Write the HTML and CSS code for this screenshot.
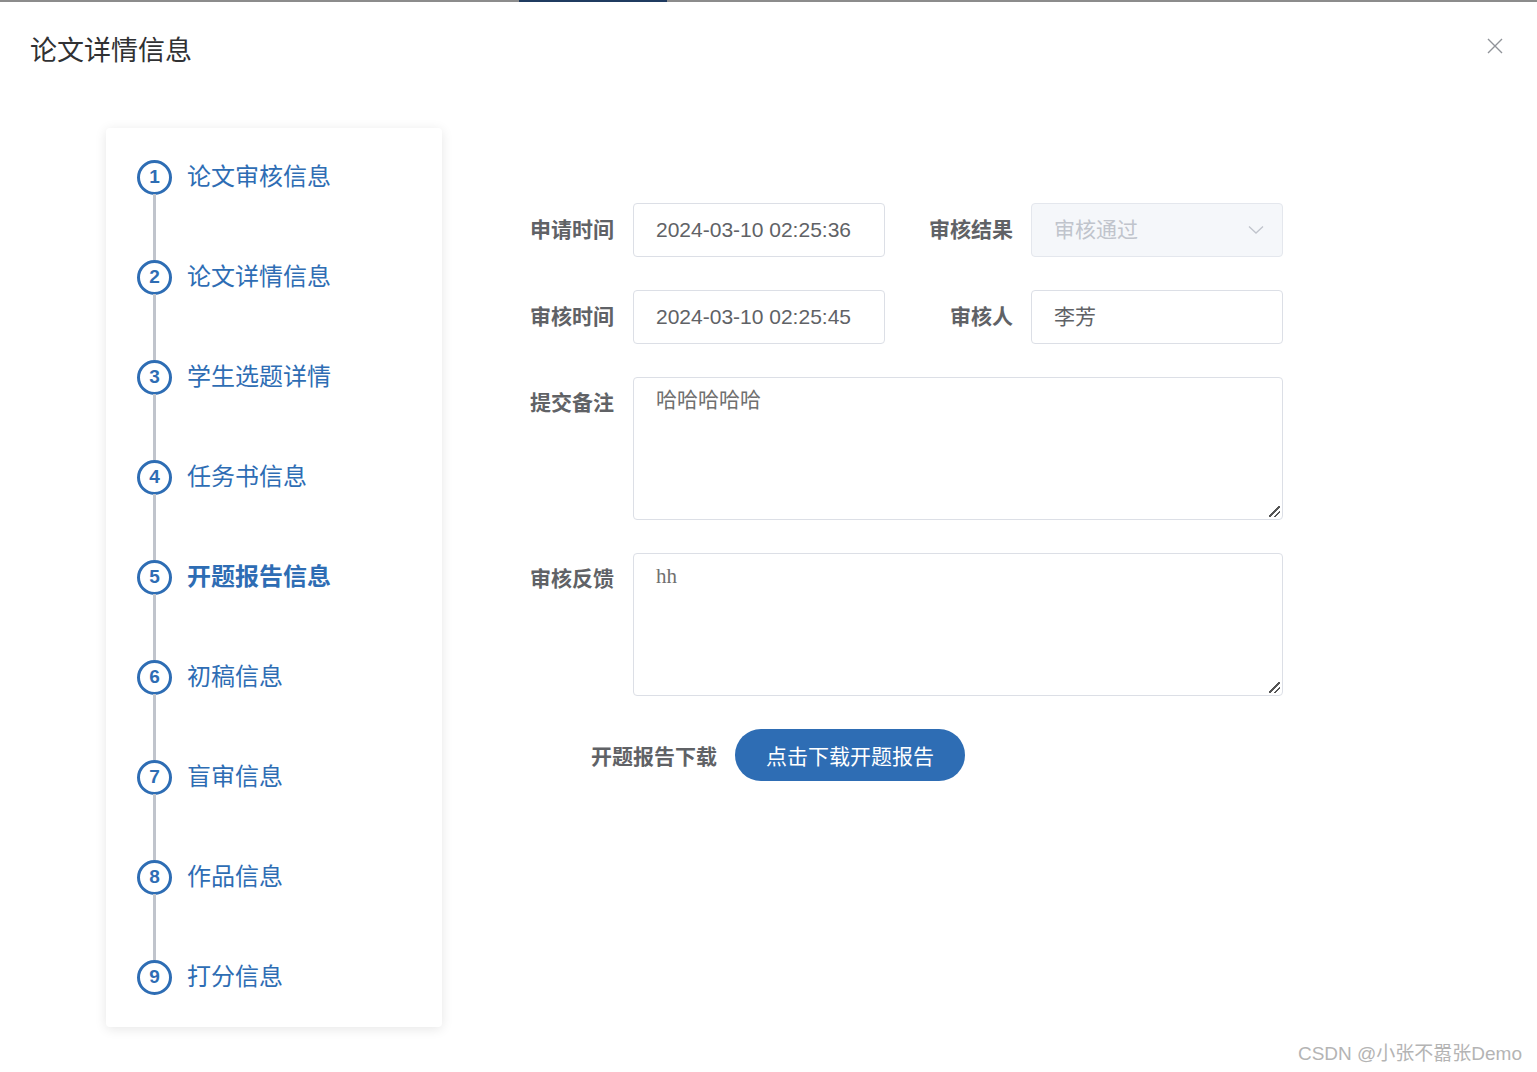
FILE: index.html
```html
<!DOCTYPE html>
<html lang="zh-CN">
<head>
<meta charset="utf-8">
<title>论文详情信息</title>
<link rel="stylesheet" href="styles.css">
</head>
<body>
<div class="topbar"><div class="topbar-active"></div></div>
<div class="dialog">
  <header class="dialog-header">
    <h2 class="dialog-title">论文详情信息</h2>
    <svg class="close" viewBox="0 0 16 16" width="16" height="16"><path d="M1 1 L15 15 M15 1 L1 15" stroke="#909399" stroke-width="1.4" fill="none"/></svg>
  </header>
  <div class="dialog-body">
    <aside class="steps">
      <div class="step"><span class="num">1</span><span class="label">论文审核信息</span></div>
      <div class="connector"></div>
      <div class="step"><span class="num">2</span><span class="label">论文详情信息</span></div>
      <div class="connector"></div>
      <div class="step"><span class="num">3</span><span class="label">学生选题详情</span></div>
      <div class="connector"></div>
      <div class="step"><span class="num">4</span><span class="label">任务书信息</span></div>
      <div class="connector"></div>
      <div class="step active"><span class="num">5</span><span class="label">开题报告信息</span></div>
      <div class="connector"></div>
      <div class="step"><span class="num">6</span><span class="label">初稿信息</span></div>
      <div class="connector"></div>
      <div class="step"><span class="num">7</span><span class="label">盲审信息</span></div>
      <div class="connector"></div>
      <div class="step"><span class="num">8</span><span class="label">作品信息</span></div>
      <div class="connector"></div>
      <div class="step"><span class="num">9</span><span class="label">打分信息</span></div>
    </aside>
    <form class="form">
      <div class="row">
        <label class="lbl">申请时间</label>
        <div class="input">2024-03-10 02:25:36</div>
        <label class="lbl lbl2">审核结果</label>
        <div class="input disabled"><span>审核通过</span>
          <svg class="arrow" viewBox="0 0 16 10" width="16" height="10"><path d="M1 1.5 L8 8 L15 1.5" stroke="#c0c4cc" stroke-width="1.3" fill="none"/></svg>
        </div>
      </div>
      <div class="row">
        <label class="lbl">审核时间</label>
        <div class="input">2024-03-10 02:25:45</div>
        <label class="lbl lbl2">审核人</label>
        <div class="input">李芳</div>
      </div>
      <div class="row">
        <label class="lbl lbl-top">提交备注</label>
        <div class="textarea">哈哈哈哈哈<span class="grip"></span></div>
      </div>
      <div class="row">
        <label class="lbl lbl-top">审核反馈</label>
        <div class="textarea">hh<span class="grip"></span></div>
      </div>
      <div class="row download">
        <label class="lbl-dl">开题报告下载</label>
        <button type="button" class="btn">点击下载开题报告</button>
      </div>
    </form>
  </div>
</div>
<div class="watermark">CSDN @小张不嚣张Demo</div>
</body>
</html>
```
FILE: styles.css
```css
* { box-sizing: border-box; }
html, body { margin: 0; padding: 0; }
body {
  width: 1537px;
  height: 1072px;
  background: #fff;
  font-family: "Liberation Sans", "Noto Sans CJK SC", sans-serif;
  color: #606266;
  overflow: hidden;
  position: relative;
}
.topbar {
  height: 2px;
  background: #8c8c8c;
}
.topbar-active {
  margin-left: 519px;
  width: 148px;
  height: 2px;
  background: #1f3b60;
}
.dialog-header {
  display: flex;
  justify-content: space-between;
  align-items: flex-start;
  padding: 0 34px 0 30px;
}
.dialog-title {
  margin: 31px 0 0;
  font-size: 27px;
  line-height: 36px;
  font-weight: 400;
  color: #303133;
}
.close {
  margin-top: 36px;
}
.dialog-body {
  display: flex;
  align-items: flex-start;
  padding: 59px 0 0 106px;
}
.steps {
  width: 336px;
  height: 899px;
  background: #fff;
  border-radius: 4px;
  box-shadow: 0 2px 12px rgba(0, 0, 0, 0.1);
  padding: 32px 0 0 31px;
  display: flex;
  flex-direction: column;
}
.step {
  display: flex;
  align-items: center;
  height: 34px;
}
.num {
  width: 35px;
  height: 35px;
  border: 3px solid #2e6db4;
  border-radius: 50%;
  display: flex;
  align-items: center;
  justify-content: center;
  color: #2e6db4;
  font-weight: 700;
  font-size: 19px;
  flex: none;
}
.label {
  margin-left: 15px;
  font-size: 24px;
  color: #2e6db4;
  line-height: 34px;
  white-space: nowrap;
}
.step.active .label { font-weight: 700; }
.connector {
  width: 3px;
  height: 66px;
  margin-left: 16px;
  background: #c0c4cc;
}
.form {
  margin: 75px 0 0 72px;
  display: flex;
  flex-direction: column;
  gap: 33px;
}
.row {
  display: flex;
  align-items: flex-start;
}
.lbl {
  width: 100px;
  margin-right: 19px;
  text-align: right;
  font-size: 21px;
  font-weight: 700;
  color: #606266;
  line-height: 54px;
  white-space: nowrap;
}
.lbl2 {
  width: 128px;
  margin-right: 18px;
}
.lbl-top {
  line-height: 52px;
}
.input {
  width: 252px;
  height: 54px;
  border: 1px solid #dcdfe6;
  border-radius: 4px;
  padding: 0 22px;
  font-size: 21px;
  line-height: 52px;
  color: #606266;
  display: flex;
  align-items: center;
  justify-content: space-between;
  white-space: nowrap;
}
.input.disabled {
  background: #f5f7fa;
  border-color: #e4e7ed;
  color: #c0c4cc;
  padding-right: 18px;
}
.textarea {
  position: relative;
  width: 650px;
  height: 143px;
  border: 1px solid #dcdfe6;
  border-radius: 4px;
  padding: 10px 22px;
  font-family: "Liberation Serif", "Noto Sans CJK SC", serif;
  font-size: 21px;
  line-height: 25px;
  color: #707070;
}
.grip {
  position: absolute;
  right: 2px;
  bottom: 2px;
  width: 11px;
  height: 11px;
  background:
    linear-gradient(135deg, transparent 0 45%, #555 45% 55%, transparent 55% 70%, #555 70% 80%, transparent 80%);
}
.download {
  margin-left: 77px;
  align-items: center;
}
.lbl-dl {
  font-size: 21px;
  font-weight: 700;
  color: #606266;
  margin-right: 18px;
  white-space: nowrap;
}
.btn {
  width: 230px;
  height: 52px;
  border: none;
  border-radius: 26px;
  background: #2e6db4;
  color: #fff;
  font-family: "Liberation Sans", "Noto Sans CJK SC", sans-serif;
  font-size: 21px;
  padding: 0;
}
.watermark {
  position: absolute;
  right: 15px;
  bottom: 7px;
  font-size: 19px;
  color: #b4b4b4;
  font-family: "Liberation Sans", "Noto Sans CJK SC", sans-serif;
  text-shadow: 0 0 2px #fff;
}
```
